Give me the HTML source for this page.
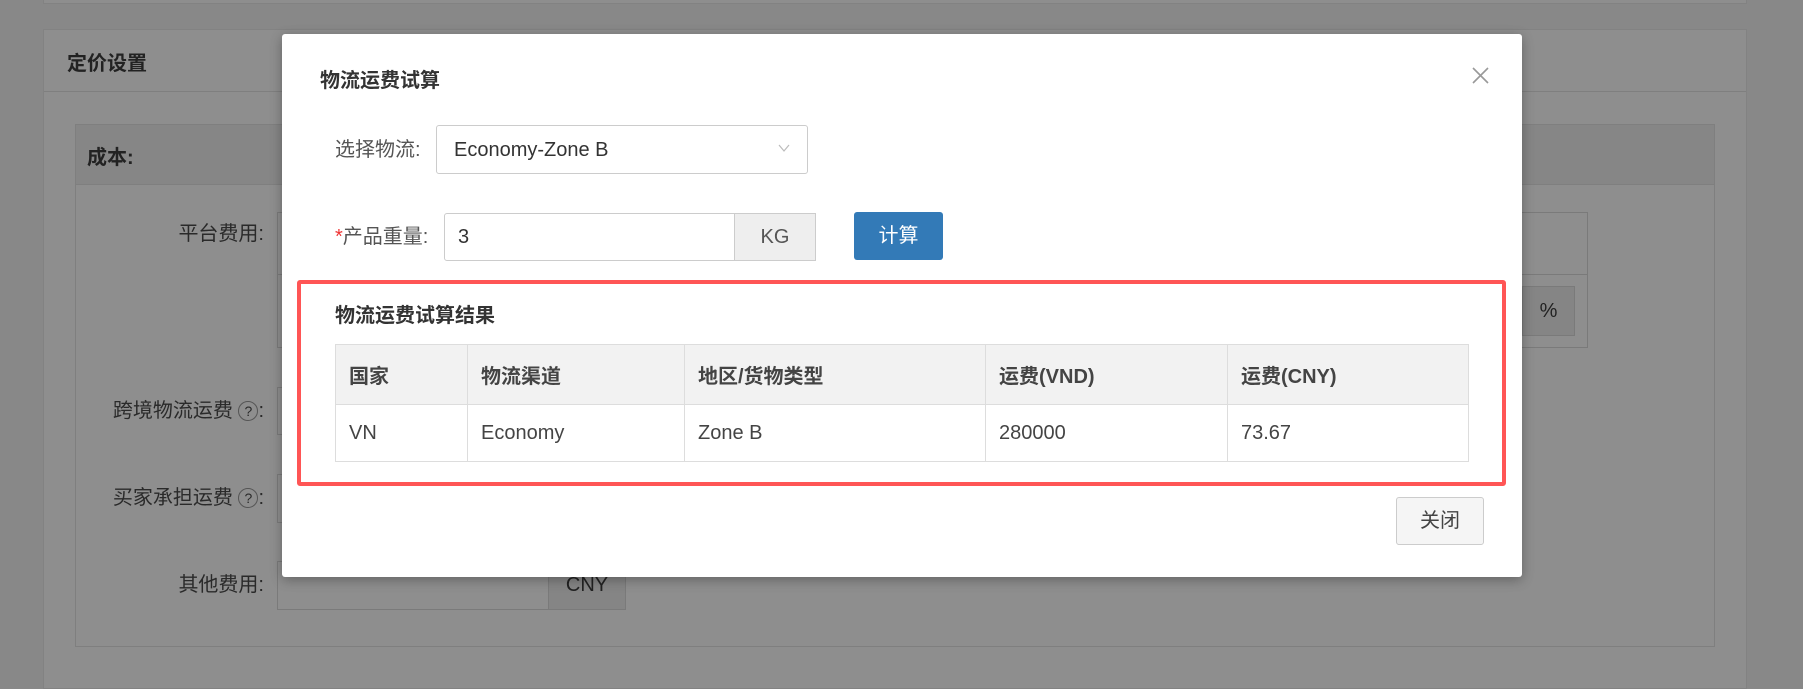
<!DOCTYPE html>
<html><head><meta charset="utf-8"><style>
*{box-sizing:border-box;margin:0;padding:0}
body{width:1803px;height:666px;overflow:hidden;background:#888;font-family:"Liberation Sans","Noto Sans CJK SC",sans-serif;color:#333;position:relative}
.a{position:absolute}
.card{background:#8e8e8e;border:1px solid #828282}
.lbl{font-size:20px;color:#2a2a2a;text-align:right;width:250px;left:14px;line-height:26px}
.inp{border:1px solid #7a7a7a;background:#8e8e8e}
.m{left:282px;top:34px;width:1240px;height:543px;background:#fff;border-radius:3px;box-shadow:0 3px 12px rgba(0,0,0,.3)}
.t{font-size:20px;line-height:26px}
table{border-collapse:collapse;position:absolute;left:53px;top:310px;width:1134px;font-size:20px;color:#444}
td,th{border:1px solid #ddd;text-align:left;padding:0 13px}
th{background:#f2f2f2;height:60px;font-weight:bold}
td{height:57px}
</style></head><body>
<div class="a card" style="left:43px;top:-10px;width:1704px;height:14px"></div>
<div class="a card" style="left:43px;top:29px;width:1704px;height:660px"></div>
<div class="a" style="left:44px;top:91px;width:1702px;height:1px;background:#7f7f7f"></div>
<div class="a" style="left:67px;top:47px;font-size:20px;font-weight:bold;color:#222">定价设置</div>
<div class="a" style="left:75px;top:124px;width:1640px;height:523px;border:1px solid #7f7f7f"></div>
<div class="a" style="left:76px;top:125px;width:1638px;height:60px;background:#868686;border-bottom:1px solid #7f7f7f"></div>
<div class="a" style="left:87px;top:141px;font-size:20px;font-weight:bold;color:#222">成本:</div>
<div class="a lbl" style="top:221px">平台费用:</div>
<div class="a inp" style="left:277px;top:212px;width:1311px;height:136px"></div>
<div class="a" style="left:278px;top:274px;width:1309px;height:1px;background:#7a7a7a"></div>
<div class="a inp" style="left:1522px;top:286px;width:53px;height:50px;background:#858585;text-align:center;line-height:48px;font-size:20px;color:#222">%</div>
<div class="a lbl" style="top:398px">跨境物流运费 <span style="display:inline-block;width:20px;height:20px;border:1px solid #555;border-radius:50%;font-size:14px;line-height:18px;text-align:center;vertical-align:1px">?</span>:</div>
<div class="a inp" style="left:277px;top:387px;width:20px;height:48px"></div>
<div class="a lbl" style="top:485px">买家承担运费 <span style="display:inline-block;width:20px;height:20px;border:1px solid #555;border-radius:50%;font-size:14px;line-height:18px;text-align:center;vertical-align:1px">?</span>:</div>
<div class="a inp" style="left:277px;top:474px;width:20px;height:49px"></div>
<div class="a lbl" style="top:572px">其他费用:</div>
<div class="a inp" style="left:277px;top:561px;width:349px;height:49px"></div>
<div class="a inp" style="left:548px;top:561px;width:78px;height:49px;background:#858585;text-align:center;line-height:47px;font-size:20px;color:#222">CNY</div>

<div class="a m">
<div class="a" style="left:38px;top:34px;font-size:20px;font-weight:bold;color:#333;line-height:26px">物流运费试算</div>
<svg class="a" style="left:1190px;top:33px" width="17" height="17" viewBox="0 0 17 17"><path d="M1 1L16 16M16 1L1 16" stroke="#999" stroke-width="1.6"/></svg>
<div class="a t" style="left:53px;top:103px;color:#555">选择物流:</div>
<div class="a" style="left:154px;top:91px;width:372px;height:49px;border:1px solid #ccc;border-radius:3px"></div>
<div class="a t" style="left:172px;top:103px;color:#333">Economy-Zone B</div>
<svg class="a" style="left:496px;top:110px" width="12" height="8" viewBox="0 0 12 8"><path d="M1 1L6 7L11 1" fill="none" stroke="#bbb" stroke-width="1.2"/></svg>
<div class="a t" style="left:53px;top:190px;color:#555"><span style="color:#e33">*</span>产品重量:</div>
<div class="a" style="left:162px;top:179px;width:291px;height:48px;border:1px solid #ccc;border-radius:3px 0 0 3px"></div>
<div class="a t" style="left:176px;top:190px">3</div>
<div class="a" style="left:452px;top:179px;width:82px;height:48px;border:1px solid #ccc;background:#eee;text-align:center;line-height:46px;font-size:20px;color:#555">KG</div>
<div class="a" style="left:572px;top:178px;width:89px;height:48px;background:#337ab7;border-radius:3px;color:#fff;text-align:center;line-height:48px;font-size:20px">计算</div>
<div class="a" style="left:15px;top:246px;width:1209px;height:206px;border:4px solid #f55;border-radius:3px"></div>
<div class="a" style="left:53px;top:269px;font-size:20px;font-weight:bold;color:#333;line-height:26px">物流运费试算结果</div>
<table><tr><th style="width:132px">国家</th><th style="width:217px">物流渠道</th><th style="width:301px">地区/货物类型</th><th style="width:242px">运费(VND)</th><th>运费(CNY)</th></tr>
<tr><td>VN</td><td>Economy</td><td>Zone B</td><td>280000</td><td>73.67</td></tr></table>
<div class="a" style="left:1114px;top:463px;width:88px;height:48px;border:1px solid #ccc;border-radius:3px;background:#f5f5f5;text-align:center;line-height:46px;font-size:20px;color:#444">关闭</div>
</div>
</body></html>
